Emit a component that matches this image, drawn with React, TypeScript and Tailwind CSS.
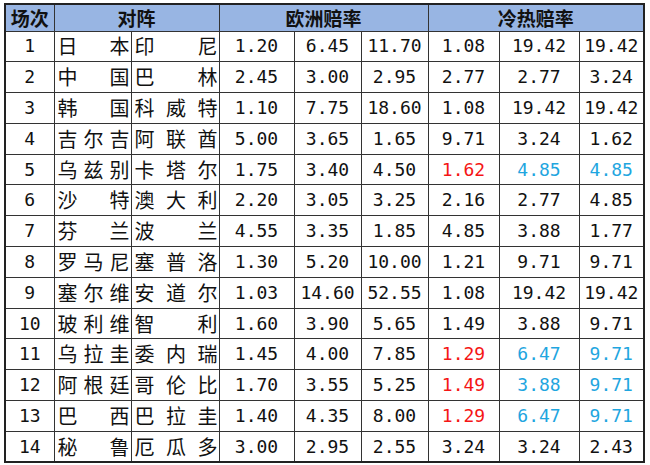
import React from 'react';

type Tone = 'red' | 'blue' | undefined;

interface Row {
  no: number;
  home: string;
  away: string;
  euro: [string, string, string];
  heat: [string, string, string];
  tones?: [Tone, Tone, Tone];
}

const rows: Row[] = [
  { no: 1, home: '日本', away: '印尼', euro: ['1.20', '6.45', '11.70'], heat: ['1.08', '19.42', '19.42'] },
  { no: 2, home: '中国', away: '巴林', euro: ['2.45', '3.00', '2.95'], heat: ['2.77', '2.77', '3.24'] },
  { no: 3, home: '韩国', away: '科威特', euro: ['1.10', '7.75', '18.60'], heat: ['1.08', '19.42', '19.42'] },
  { no: 4, home: '吉尔吉', away: '阿联酋', euro: ['5.00', '3.65', '1.65'], heat: ['9.71', '3.24', '1.62'] },
  {
    no: 5,
    home: '乌兹别',
    away: '卡塔尔',
    euro: ['1.75', '3.40', '4.50'],
    heat: ['1.62', '4.85', '4.85'],
    tones: ['red', 'blue', 'blue']
  },
  { no: 6, home: '沙特', away: '澳大利', euro: ['2.20', '3.05', '3.25'], heat: ['2.16', '2.77', '4.85'] },
  { no: 7, home: '芬兰', away: '波兰', euro: ['4.55', '3.35', '1.85'], heat: ['4.85', '3.88', '1.77'] },
  { no: 8, home: '罗马尼', away: '塞普洛', euro: ['1.30', '5.20', '10.00'], heat: ['1.21', '9.71', '9.71'] },
  { no: 9, home: '塞尔维', away: '安道尔', euro: ['1.03', '14.60', '52.55'], heat: ['1.08', '19.42', '19.42'] },
  { no: 10, home: '玻利维', away: '智利', euro: ['1.60', '3.90', '5.65'], heat: ['1.49', '3.88', '9.71'] },
  {
    no: 11,
    home: '乌拉圭',
    away: '委内瑞',
    euro: ['1.45', '4.00', '7.85'],
    heat: ['1.29', '6.47', '9.71'],
    tones: ['red', 'blue', 'blue']
  },
  {
    no: 12,
    home: '阿根廷',
    away: '哥伦比',
    euro: ['1.70', '3.55', '5.25'],
    heat: ['1.49', '3.88', '9.71'],
    tones: ['red', 'blue', 'blue']
  },
  {
    no: 13,
    home: '巴西',
    away: '巴拉圭',
    euro: ['1.40', '4.35', '8.00'],
    heat: ['1.29', '6.47', '9.71'],
    tones: ['red', 'blue', 'blue']
  },
  { no: 14, home: '秘鲁', away: '厄瓜多', euro: ['3.00', '2.95', '2.55'], heat: ['3.24', '3.24', '2.43'] }
];

const cjk = "font-['Noto_Sans_CJK_SC',sans-serif]";
const mono = "font-['DejaVu_Sans_Mono',monospace]";

function toneClass(t: Tone): string {
  if (t === 'red') return 'text-[#f51515]';
  if (t === 'blue') return 'text-[#1fa6df]';
  return 'text-[#111]';
}

function Spread({ text }: { text: string }): React.JSX.Element {
  return (
    <div className="flex justify-between pl-[3px] pr-[1px]">
      {text.split('').map((c, i) => (
        <span key={i}>{c}</span>
      ))}
    </div>
  );
}

export default function App(): React.JSX.Element {
  const cell = 'border border-[#333] p-0';
  return (
    <div className="h-[465px] w-[650px] bg-white pl-[4px] pt-[3px]">
      <table className="table-fixed border-collapse border-2 border-[#222] text-[#111]">
        <colgroup>
          <col className="w-[49px]" />
          <col className="w-[77px]" />
          <col className="w-[88px]" />
          <col className="w-[75px]" />
          <col className="w-[67px]" />
          <col className="w-[67px]" />
          <col className="w-[71px]" />
          <col className="w-[80px]" />
          <col className="w-[65px]" />
        </colgroup>
        <thead>
          <tr className={`h-[27px] bg-[#98b5e3] text-[19px] font-bold leading-none ${cjk}`}>
            <th className={cell}>场次</th>
            <th className={cell} colSpan={2}>
              对阵
            </th>
            <th className={cell} colSpan={3}>
              欧洲赔率
            </th>
            <th className={cell} colSpan={3}>
              冷热赔率
            </th>
          </tr>
        </thead>
        <tbody>
          {rows.map((r) => (
            <tr key={r.no} className="h-[30.8px] leading-none">
              <td className={`${cell} ${mono} text-center text-[18px]`}>{r.no}</td>
              <td className={`${cell} ${cjk} text-[20px]`}>
                <Spread text={r.home} />
              </td>
              <td className={`${cell} ${cjk} text-[20px]`}>
                <Spread text={r.away} />
              </td>
              {r.euro.map((v, i) => (
                <td key={`e${i}`} className={`${cell} ${mono} text-center text-[18px]`}>
                  {v}
                </td>
              ))}
              {r.heat.map((v, i) => (
                <td
                  key={`h${i}`}
                  className={`${cell} ${mono} text-center text-[18px] ${toneClass(r.tones?.[i])}`}
                >
                  {v}
                </td>
              ))}
            </tr>
          ))}
        </tbody>
      </table>
    </div>
  );
}
